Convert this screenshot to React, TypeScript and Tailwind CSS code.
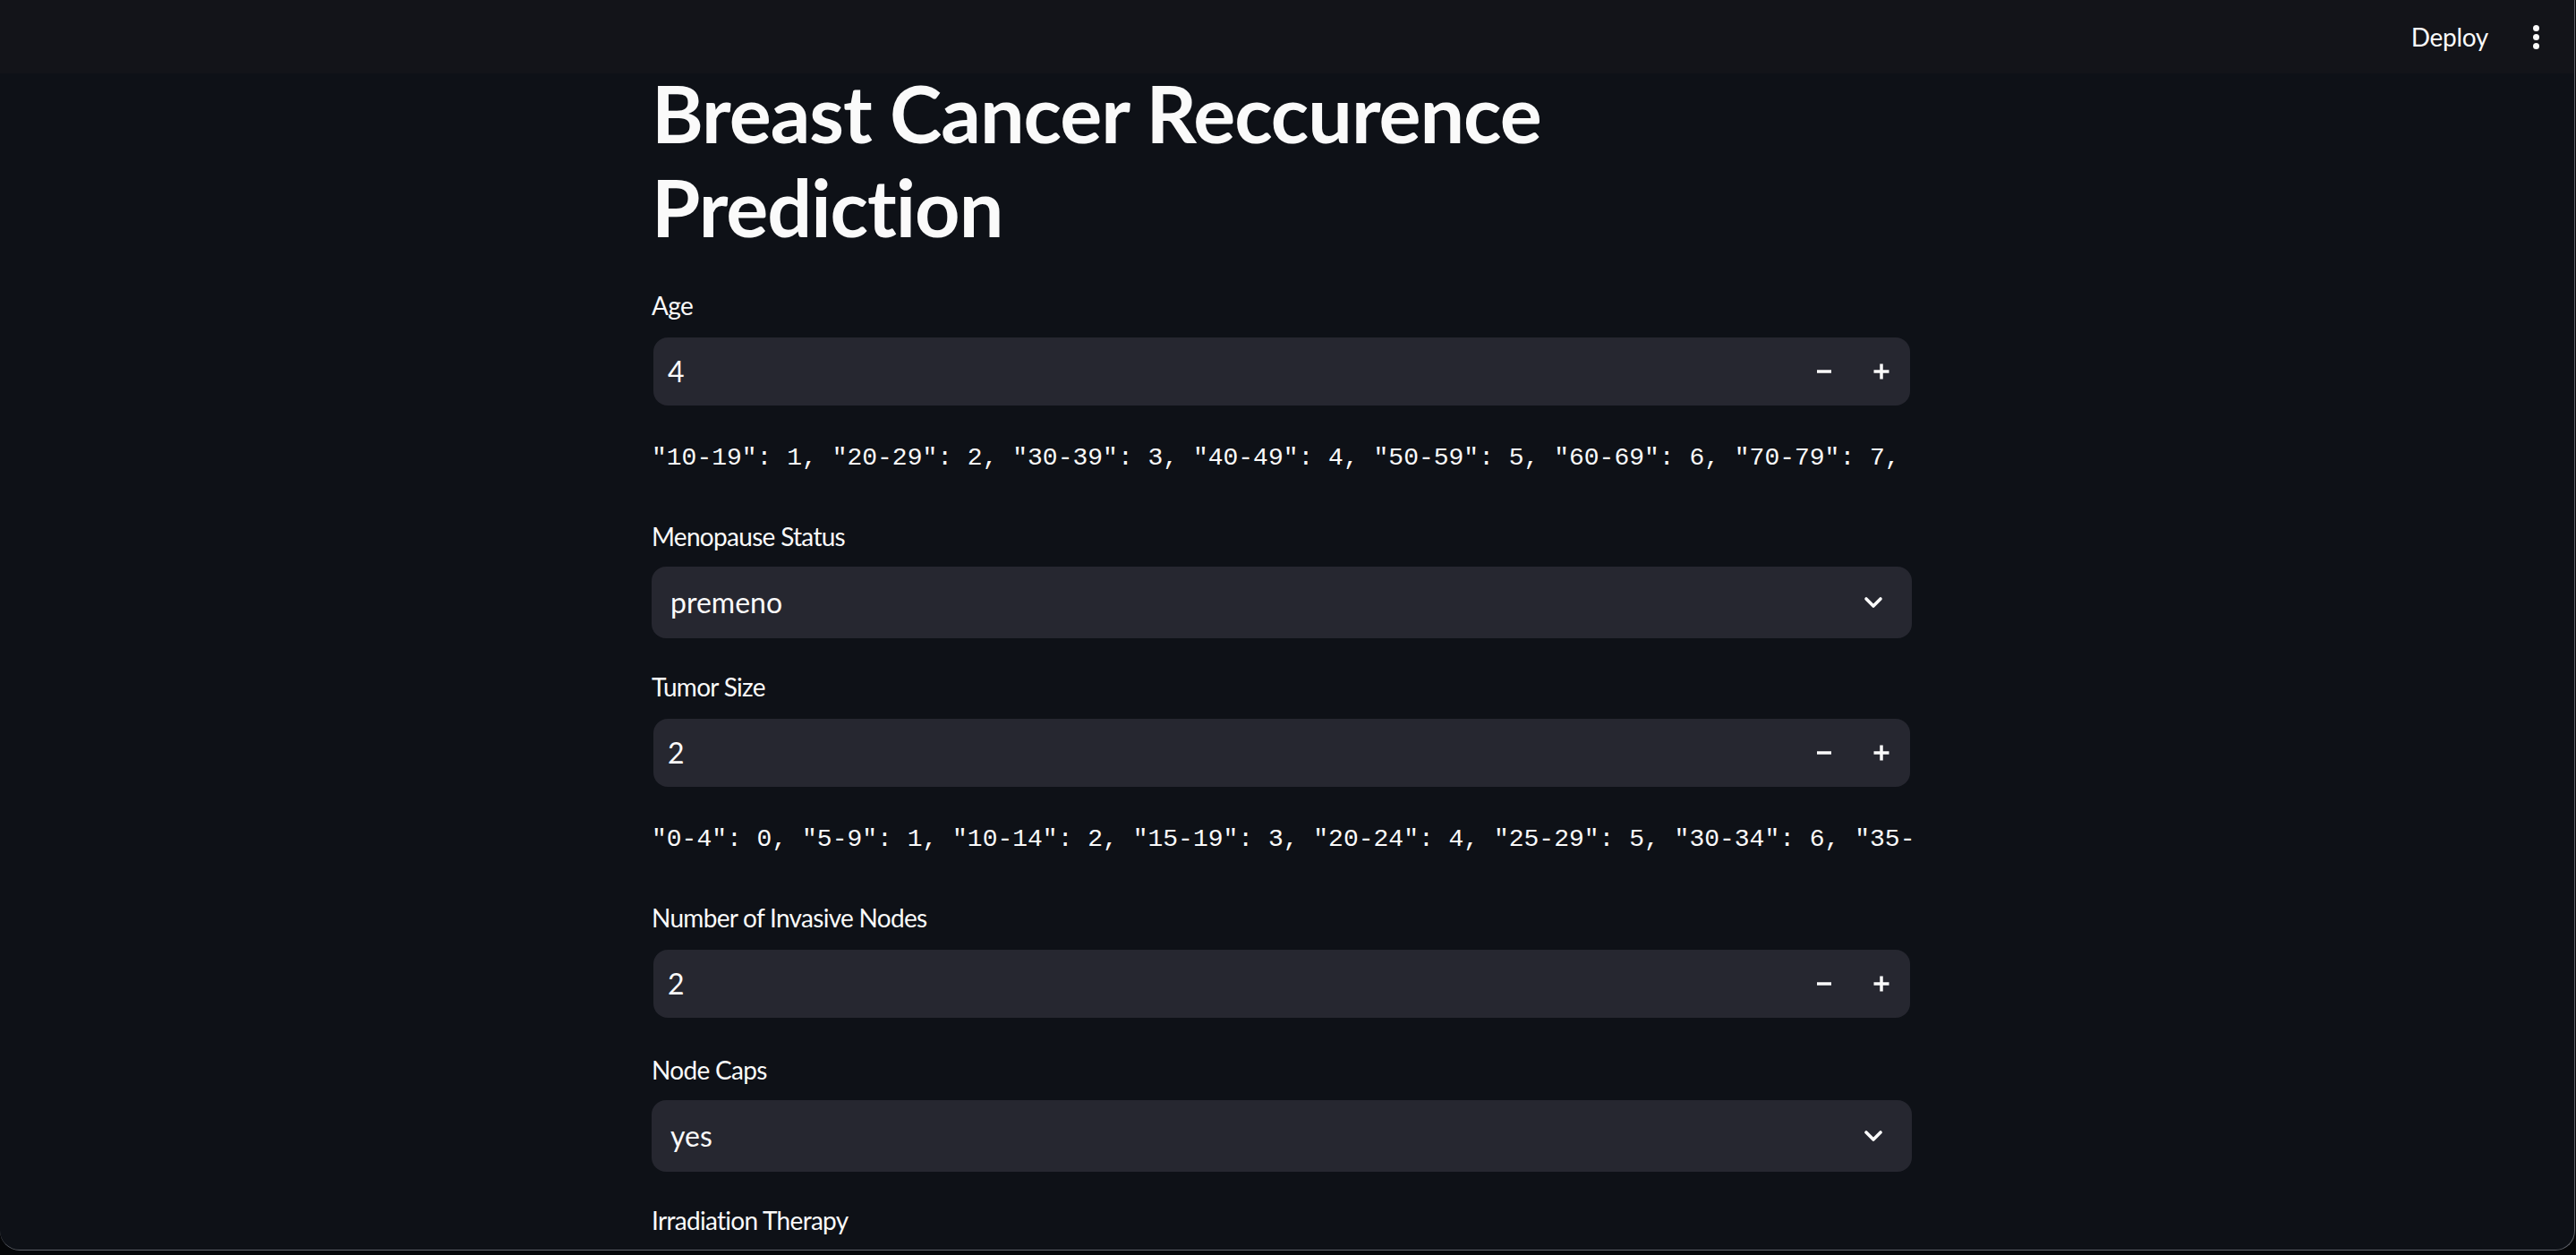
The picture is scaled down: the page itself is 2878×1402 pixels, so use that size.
import React from 'react';

const AGE_MAP = '"10-19": 1, "20-29": 2, "30-39": 3, "40-49": 4, "50-59": 5, "60-69": 6, "70-79": 7,';
const SIZE_MAP = '"0-4": 0, "5-9": 1, "10-14": 2, "15-19": 3, "20-24": 4, "25-29": 5, "30-34": 6, "35-';

function Label({ text, className = '' }: { text: string; className?: string }) {
  return <div className={`h-[40px] text-[28px] leading-[40px] tracking-[-0.7px] text-[#fafafa] ${className}`}>{text}</div>;
}

function NumberField({ label, value, className = '' }: { label: string; value: string; className?: string }) {
  return (
    <div className={className}>
      <Label text={label} />
      <div className="mx-[2px] mt-[16px] flex h-[76px] items-center rounded-[16px] bg-[#262730] pl-[16px]">
        <span className="flex-1 text-[32px] text-[#fafafa]">{value}</span>
        <button className="flex h-full w-[64px] items-center justify-center">
          <svg width="18" height="18" viewBox="0 0 18 18"><rect x="1" y="7.25" width="16" height="3.5" fill="#fafafa" /></svg>
        </button>
        <button className="flex h-full w-[64px] items-center justify-center">
          <svg width="18" height="18" viewBox="0 0 18 18">
            <rect x="0.5" y="7.25" width="17" height="3.5" fill="#fafafa" />
            <rect x="7.25" y="0.5" width="3.5" height="17" fill="#fafafa" />
          </svg>
        </button>
      </div>
    </div>
  );
}

function SelectField({ label, value, className = '' }: { label: string; value?: string; className?: string }) {
  return (
    <div className={className}>
      <Label text={label} />
      <div className="mt-[14px] flex h-[80px] items-center justify-between rounded-[16px] bg-[#262730] pl-[21px] pr-[32px]">
        <span className="text-[32px] text-[#fafafa]">{value}</span>
        <svg width="22" height="14" viewBox="0 0 22 14" fill="none">
          <path d="M3 3 L11 11 L19 3" stroke="#fafafa" strokeWidth="3.6" strokeLinecap="round" strokeLinejoin="round" />
        </svg>
      </div>
    </div>
  );
}

function MapText({ text, className = '' }: { text: string; className?: string }) {
  return (
    <div className={`h-[40px] whitespace-pre font-['Liberation_Mono',monospace] text-[28px] leading-[40px] text-[#fafafa] ${className}`}>
      {text}
    </div>
  );
}

export default function App() {
  return (
    <div className="h-[1402px] w-[2878px] overflow-hidden bg-[#050608] font-['Lato',sans-serif]">
      <div className="h-[1397px] w-[2877px] overflow-hidden rounded-b-[22px] border-r border-b border-[#5e6168] bg-[#0e1117]">
        {/* top bar */}
        <div className="flex h-[82px] items-center justify-end bg-[#131419] pr-[39px]">
          <span className="text-[28px] tracking-[-0.3px] text-[#fafafa]">Deploy</span>
          <div className="ml-[50px] flex flex-col items-center gap-[3px]">
            <span className="h-[7px] w-[7px] rounded-full bg-[#fafafa]" />
            <span className="h-[7px] w-[7px] rounded-full bg-[#fafafa]" />
            <span className="h-[7px] w-[7px] rounded-full bg-[#fafafa]" />
          </div>
        </div>

        <div className="flex justify-center pr-[12px]">
          <div className="w-[1408px]">
            <h1 className="-mt-[8px] text-[88px] font-bold leading-[105px] tracking-[-1px] text-[#fafafa]">
              Breast Cancer Reccurence
              <br />
              Prediction
            </h1>

            <NumberField label="Age" value="4" className="mt-[37px]" />
            <MapText text={AGE_MAP} className="mt-[39px]" />

            <SelectField label="Menopause Status" value="premeno" className="mt-[47px]" />

            <NumberField label="Tumor Size" value="2" className="mt-[34px]" />
            <MapText text={SIZE_MAP} className="mt-[39px]" />

            <NumberField label="Number of Invasive Nodes" value="2" className="mt-[47px]" />

            <SelectField label="Node Caps" value="yes" className="mt-[38px]" />

            <SelectField label="Irradiation Therapy" className="mt-[34px]" />
          </div>
        </div>
      </div>
    </div>
  );
}
